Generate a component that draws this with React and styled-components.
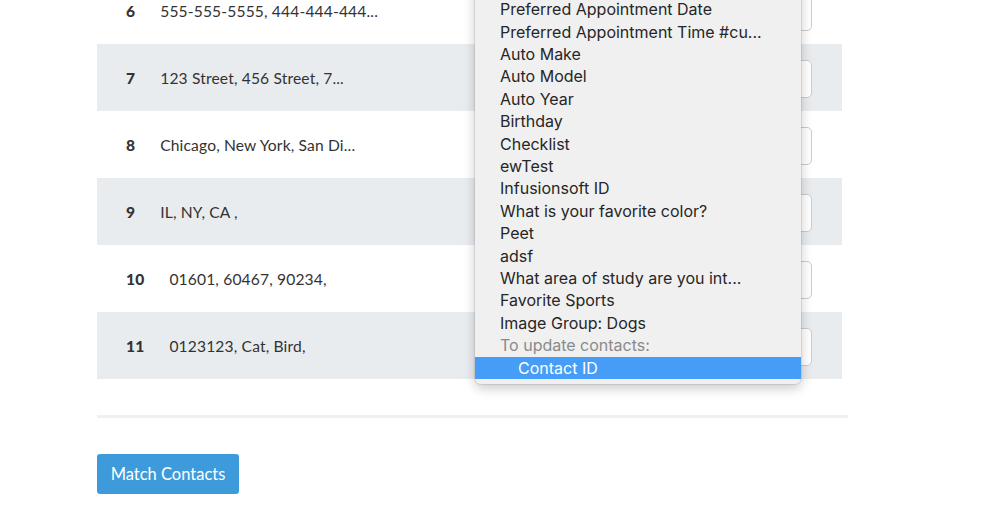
import React from 'react'
import styled, { createGlobalStyle } from 'styled-components'

const GlobalStyle = createGlobalStyle`
  html, body { margin: 0; padding: 0; background: #fff; overflow: hidden; }
  body { font-family: Lato, "Liberation Sans", sans-serif; color: #333; }
`

const rows = [
  { n: 6, text: '555-555-5555, 444-444-444...' },
  { n: 7, text: '123 Street, 456 Street, 7...' },
  { n: 8, text: 'Chicago, New York, San Di...' },
  { n: 9, text: 'IL, NY, CA ,' },
  { n: 10, text: '01601, 60467, 90234,' },
  { n: 11, text: '0123123, Cat, Bird,' },
]

const options = [
  'Preferred Appointment Date',
  'Preferred Appointment Time #cu...',
  'Auto Make',
  'Auto Model',
  'Auto Year',
  'Birthday',
  'Checklist',
  'ewTest',
  'Infusionsoft ID',
  'What is your favorite color?',
  'Peet',
  'adsf',
  'What area of study are you int...',
  'Favorite Sports',
  'Image Group: Dogs',
]

function App() {
  return (
    <Page>
      <GlobalStyle />
      <Table>
        {rows.map((r, i) => (
          <Row key={r.n} $striped={i % 2 === 1}>
            <Num>{r.n}</Num>
            <Values>{r.text}</Values>
            <SelectBox />
          </Row>
        ))}
      </Table>
      <Divider />
      <Footer>
        <MatchButton>Match Contacts</MatchButton>
      </Footer>
      <Menu>
        {options.map(o => (
          <Option key={o}>{o}</Option>
        ))}
        <GroupLabel>To update contacts:</GroupLabel>
        <Option $selected $indent>Contact ID</Option>
      </Menu>
    </Page>
  )
}

const Page = styled.div`
  position: relative;
  margin-top: -23px;
  padding-left: 97px;
  width: 903px;
`

const Table = styled.div`
  width: 745px;
  display: flex;
  flex-direction: column;
`

const Row = styled.div`
  height: 67px;
  display: flex;
  align-items: center;
  gap: 25px;
  padding: 0 30px 0 29px;
  background: ${p => (p.$striped ? '#e9ecef' : '#fff')};
  font-size: 15.6px;
  letter-spacing: 0.15px;
`

const Num = styled.span`
  font-weight: 900;
  color: #333;
`

const Values = styled.span`
  flex: 1;
  color: #333;
`

const SelectBox = styled.div`
  width: 320px;
  height: 38px;
  box-sizing: border-box;
  border: 1px solid #ccc;
  border-radius: 5px;
  background: #fff;
  margin-top: 3px;
`

const Divider = styled.div`
  width: 751px;
  height: 3px;
  background: #f0f0f0;
  margin-top: 36px;
`

const Footer = styled.div`
  padding-top: 36px;
`

const MatchButton = styled.button`
  width: 142px;
  height: 40px;
  border: none;
  border-radius: 3px;
  background: #3d9bdb;
  color: #fff;
  font-family: Lato, "Liberation Sans", sans-serif;
  font-size: 16.5px;
  padding: 0;
`

const Menu = styled.div`
  position: absolute;
  left: 475px;
  top: -7px;
  width: 326px;
  box-sizing: border-box;
  padding: 28.3px 0 5px;
  background: #f0f0f0;
  border-radius: 0 0 6px 6px;
  box-shadow: 0 4px 12px rgba(0, 0, 0, 0.22), 0 0 0 1px rgba(0, 0, 0, 0.08);
  font-family: Inter, "Liberation Sans", sans-serif;
  font-size: 16px;
`

const Option = styled.div`
  height: 22.4px;
  line-height: 22.4px;
  padding-left: ${p => (p.$indent ? '43px' : '25px')};
  color: ${p => (p.$selected ? '#fff' : '#262626')};
  background: ${p => (p.$selected ? '#469df8' : 'transparent')};
  white-space: nowrap;
`

const GroupLabel = styled.div`
  height: 22.4px;
  line-height: 22.4px;
  padding-left: 25px;
  color: #8a8a8a;
`

export default App
